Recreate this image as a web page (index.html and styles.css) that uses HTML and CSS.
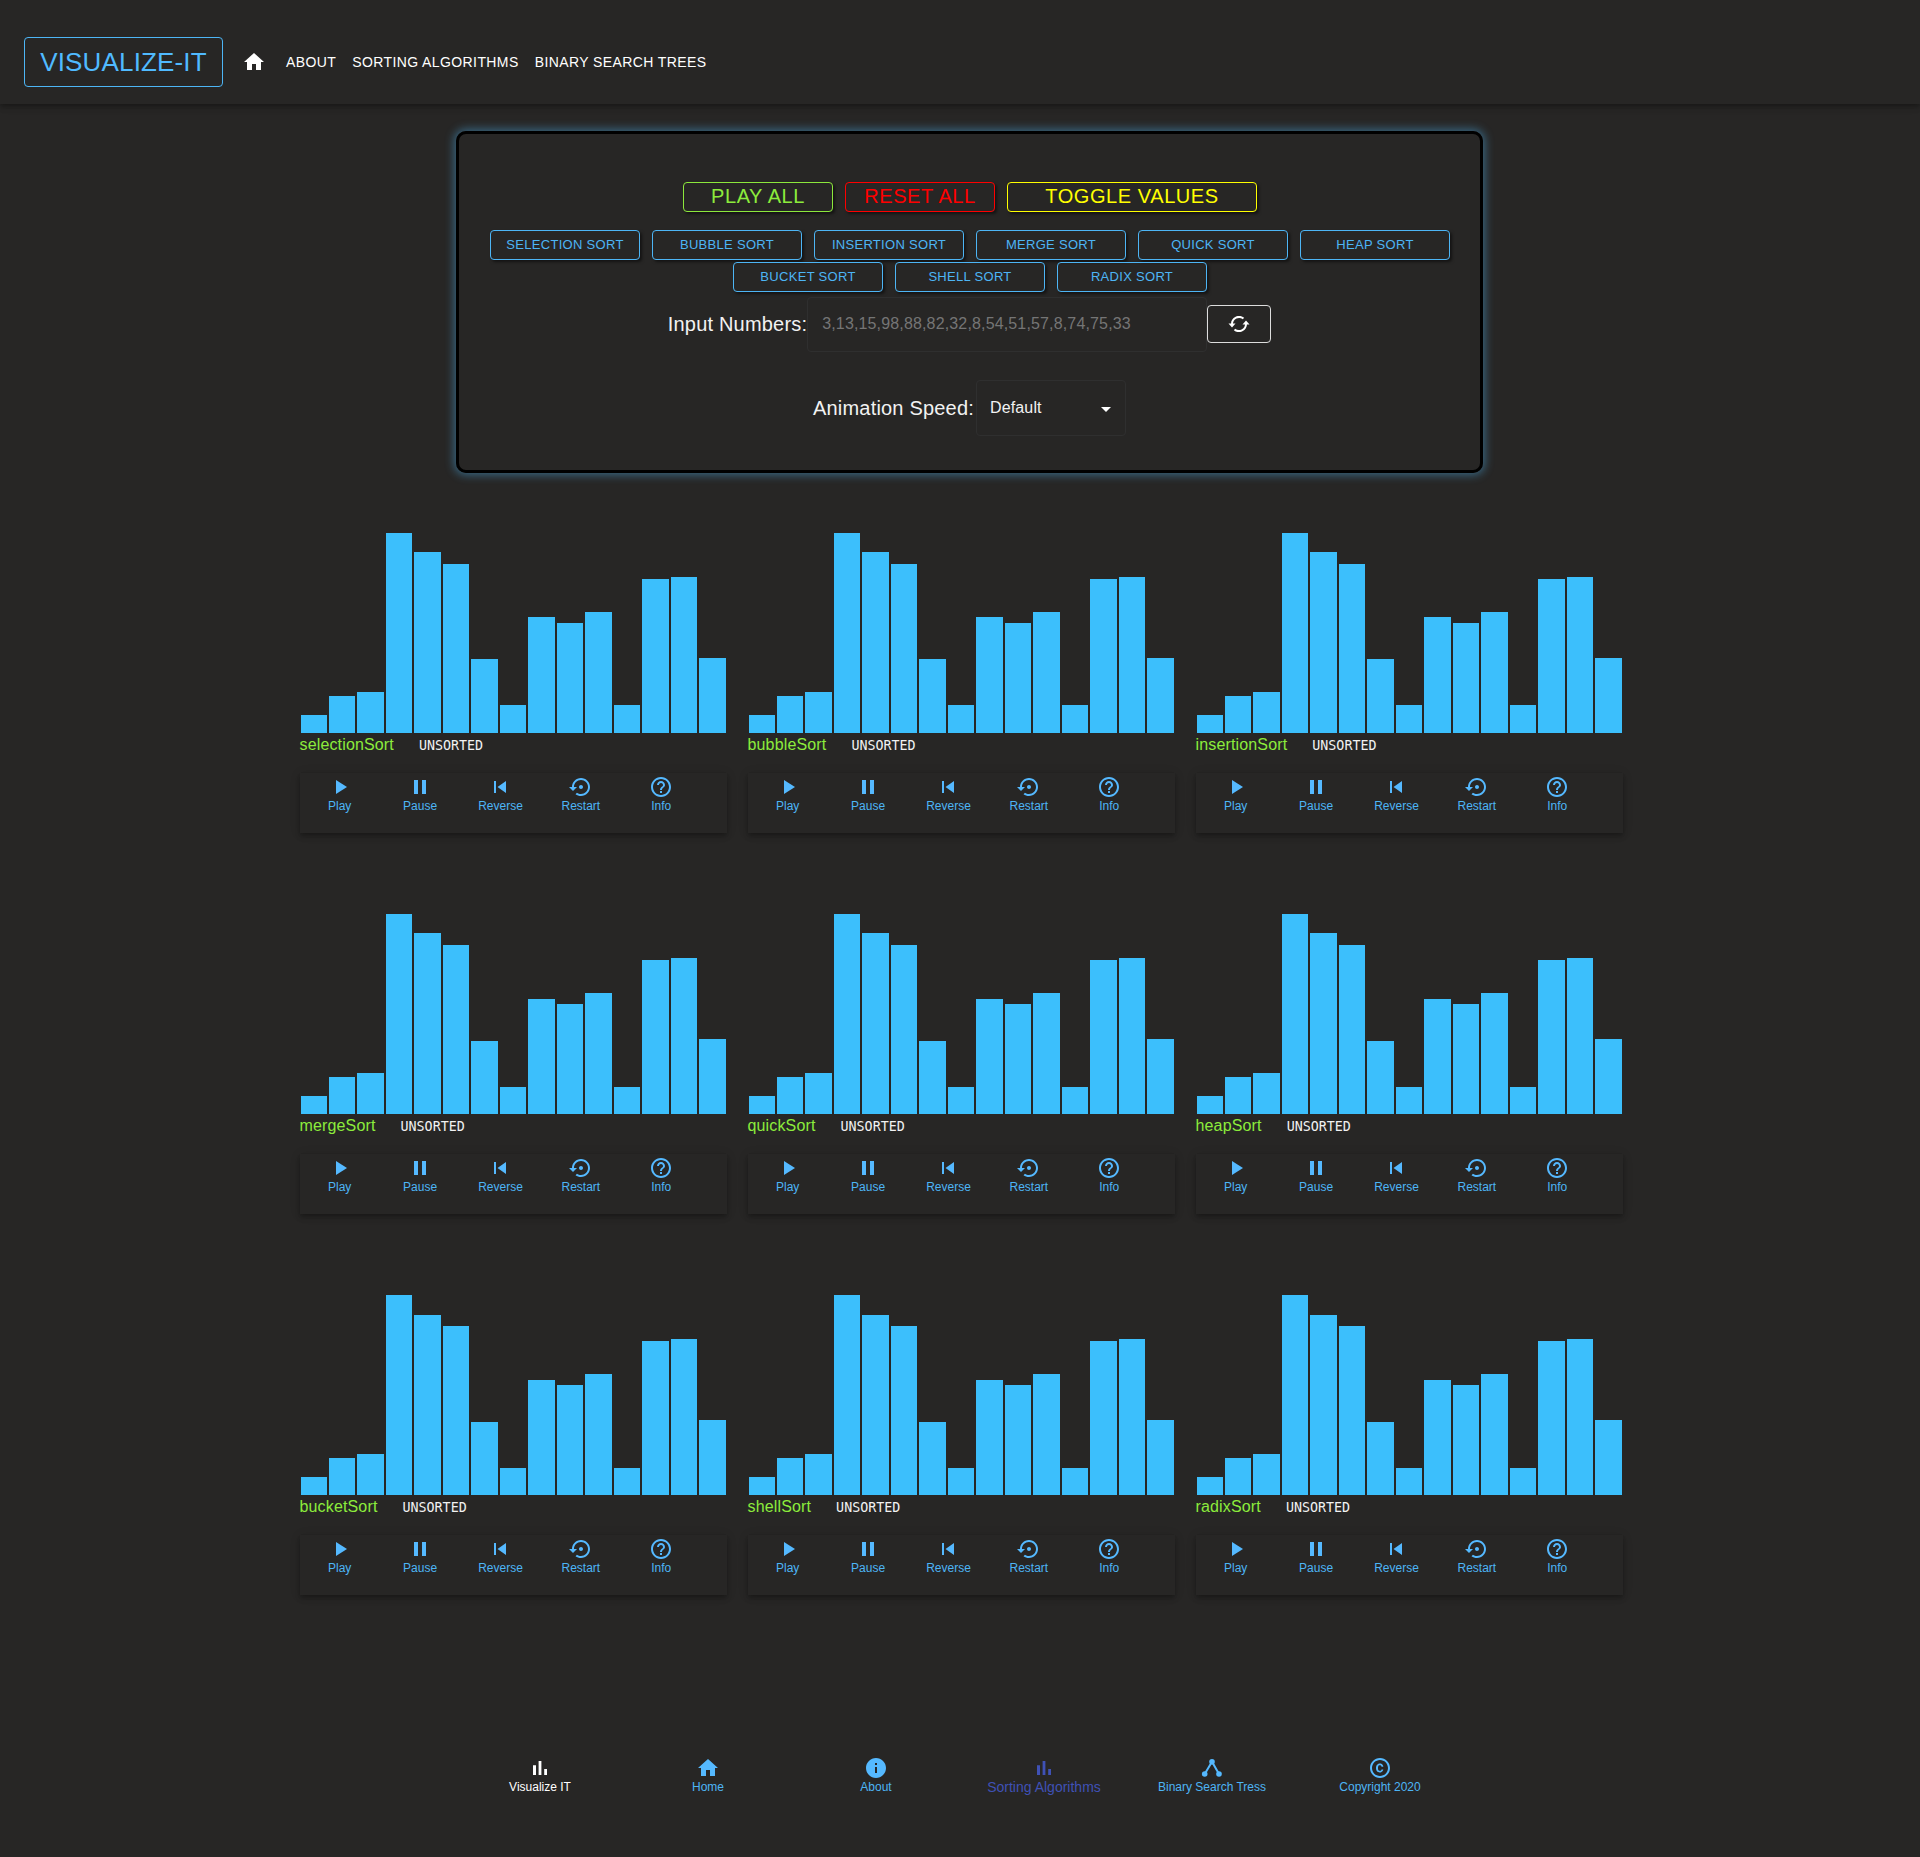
FILE: index.html
```html
<!DOCTYPE HTML>
<html>
<head>
<meta charset="utf-8">
<title>Visualize-IT</title>
<link rel="stylesheet" href="styles.css">
</head>
<body>
<header class="topbar">
  <a class="logo" href="#">VISUALIZE-IT</a>
  <a class="home-link" href="#">
    <svg viewBox="0 0 24 24"><path d="M10 20v-6h4v6h5v-8h3L12 3 2 12h3v8z"/></svg>
  </a>
  <a class="nav-link" href="#">About</a>
  <a class="nav-link" href="#">Sorting Algorithms</a>
  <a class="nav-link" href="#">Binary Search Trees</a>
</header>

<section class="panel">
  <div class="btn-row">
    <button class="btn btn-big btn-green">Play All</button>
    <button class="btn btn-big btn-red">Reset All</button>
    <button class="btn btn-big btn-yellow btn-wide">Toggle Values</button>
  </div>
  <div class="btn-row sort-row">
    <button class="btn">Selection Sort</button>
    <button class="btn">Bubble Sort</button>
    <button class="btn">Insertion Sort</button>
    <button class="btn">Merge Sort</button>
    <button class="btn">Quick Sort</button>
    <button class="btn">Heap Sort</button>
    <button class="btn">Bucket Sort</button>
    <button class="btn">Shell Sort</button>
    <button class="btn">Radix Sort</button>
  </div>
  <div class="input-row">
    <label class="field-label" for="numbers">Input Numbers:</label>
    <input class="numbers-input" id="numbers" type="text" placeholder="3,13,15,98,88,82,32,8,54,51,57,8,74,75,33">
    <button class="refresh-btn">
      <svg viewBox="0 0 22 16">
        <path class="sync-line" d="M4 8A7 7 0 0 1 15.500 2.600M18 8A7 7 0 0 1 6.500 13.400"/>
        <path d="M.5 7.500h7L4 11.500zM14.500 8.500h7L18 4.500z"/>
      </svg>
    </button>
  </div>
  <div class="speed-row">
    <span class="field-label">Animation Speed:</span>
    <div class="speed-select">
      <span>Default</span>
      <i class="caret"></i>
    </div>
  </div>
</section>

<main class="sorters" id="sorters"></main>

<footer class="bottom-nav">
  <a class="bottom-item white" href="#">
    <svg viewBox="0 0 24 24"><path d="M5 9.2h3V19H5zM10.6 5h2.8v14h-2.8zm5.6 8H19v6h-2.8z"/></svg>
    <span>Visualize IT</span>
  </a>
  <a class="bottom-item" href="#">
    <svg viewBox="0 0 24 24"><path d="M10 20v-6h4v6h5v-8h3L12 3 2 12h3v8z"/></svg>
    <span>Home</span>
  </a>
  <a class="bottom-item" href="#">
    <svg viewBox="0 0 24 24"><path d="M12 2C6.48 2 2 6.48 2 12s4.48 10 10 10 10-4.48 10-10S17.52 2 12 2zm1 15h-2v-6h2v6zm0-8h-2V7h2v2z"/></svg>
    <span>About</span>
  </a>
  <a class="bottom-item selected" href="#">
    <svg viewBox="0 0 24 24"><path d="M5 9.2h3V19H5zM10.6 5h2.8v14h-2.8zm5.6 8H19v6h-2.8z"/></svg>
    <span>Sorting Algorithms</span>
  </a>
  <a class="bottom-item" href="#">
    <svg viewBox="0 0 24 24"><path class="tree-line" d="M12 5.700 4.700 18M12 5.700 19 18"/><circle cx="12" cy="5.700" r="2.800"/><circle cx="4.700" cy="18" r="2.800"/><circle cx="19" cy="18" r="2.800"/></svg>
    <span>Binary Search Tress</span>
  </a>
  <a class="bottom-item" href="#">
    <svg viewBox="0 0 24 24"><path d="M10.08 10.86c.05-.33.16-.62.3-.87s.34-.46.59-.62c.24-.15.54-.22.91-.23.23.01.44.05.63.13.2.09.38.21.52.36s.25.33.34.53.13.42.14.64h1.79c-.02-.47-.11-.9-.28-1.29s-.4-.73-.7-1.01-.66-.5-1.08-.66-.88-.23-1.39-.23c-.65 0-1.22.11-1.7.34s-.88.53-1.2.92-.56.84-.71 1.36S8 11.29 8 11.87v.27c0 .58.08 1.12.23 1.64s.39.97.71 1.35.72.69 1.2.91 1.05.34 1.7.34c.47 0 .91-.08 1.32-.23s.77-.36 1.08-.63.56-.58.74-.94.29-.74.3-1.15h-1.79c-.01.21-.06.4-.15.58s-.21.33-.36.46-.32.23-.52.3c-.19.07-.39.09-.6.1-.36-.01-.66-.08-.89-.23-.25-.16-.45-.37-.59-.62s-.25-.55-.3-.88-.08-.67-.08-1v-.27c0-.35.03-.68.08-1.01zM12 2C6.48 2 2 6.48 2 12s4.48 10 10 10 10-4.48 10-10S17.52 2 12 2zm0 18c-4.41 0-8-3.59-8-8s3.59-8 8-8 8 3.59 8 8-3.59 8-8 8z"/></svg>
    <span>Copyright 2020</span>
  </a>
</footer>

<script src="script.js"></script>
</body>
</html>
```

FILE: styles.css
```css
* {
  box-sizing: border-box;
}

body {
  margin: 0;
  height: 1857px;
  overflow: hidden;
  background-color: #272625;
  color: #fff;
  font-family: "Liberation Sans", Arial, sans-serif;
}

a {
  text-decoration: none;
  color: inherit;
}

button {
  font-family: inherit;
  background: none;
  cursor: pointer;
}

/* top bar */
.topbar {
  display: flex;
  align-items: center;
  height: 104px;
  padding: 20px 0 0 24px;
  box-shadow: 0 2px 4px -1px rgba(0, 0, 0, 0.2), 0 4px 5px 0 rgba(0, 0, 0, 0.14), 0 1px 10px 0 rgba(0, 0, 0, 0.12);
}

.logo {
  display: block;
  width: 199px;
  height: 50px;
  line-height: 48px;
  text-align: center;
  border: 1px solid #4db5f5;
  border-radius: 4px;
  color: #50baff;
  font-size: 26px;
  letter-spacing: 0.15px;
}

.home-link {
  display: block;
  width: 24px;
  height: 24px;
  margin: 0 12px 0 19px;
}

.home-link svg {
  display: block;
  fill: #fff;
}

.nav-link {
  padding: 0 8px;
  font-size: 14px;
  letter-spacing: 0.4px;
  text-transform: uppercase;
  line-height: 24px;
}

/* control panel */
.panel {
  width: 1027px;
  height: 342px;
  margin: 27px 0 0 456px;
  padding: 48px 0 0 1px;
  border: 3px solid #000;
  border-radius: 10px;
  box-shadow: 0 0 10px 2px rgba(77, 181, 245, 0.45);
}

.btn-row {
  display: flex;
  flex-wrap: wrap;
  justify-content: center;
  column-gap: 12px;
  row-gap: 2px;
}

.sort-row {
  margin-top: 18px;
}

.btn {
  width: 150px;
  height: 30px;
  padding: 0 0 2px;
  border: 1px solid #4db5f5;
  border-radius: 4px;
  color: #4db5f5;
  font-size: 13px;
  letter-spacing: 0.3px;
  text-transform: uppercase;
  box-shadow: 2px 2px 3px rgba(0, 0, 0, 0.5);
}

.btn-big {
  font-size: 20px;
  letter-spacing: 0.57px;
}

.btn-wide {
  width: 250px;
}

.btn-green {
  border-color: #8ce83c;
  color: #8cec3c;
}

.btn-red {
  border-color: #f00;
  color: #f00;
}

.btn-yellow {
  border-color: #ff0;
  color: #ff0;
}

.input-row {
  display: flex;
  align-items: center;
  justify-content: center;
  margin-top: 5px;
  padding-right: 1px;
}

.field-label {
  font-size: 20px;
  letter-spacing: 0.19px;
  color: #f2f2f2;
}

.input-row .field-label {
  padding-bottom: 1px;
}

.numbers-input {
  width: 400px;
  height: 55px;
  padding: 0 14px 2px;
  border: 1px solid #2f2f2f;
  border-radius: 4px;
  background: none;
  color: #fff;
  font-family: inherit;
  font-size: 16px;
  letter-spacing: 0.15px;
  outline: none;
}

.numbers-input::placeholder {
  color: #757575;
  opacity: 1;
}

.refresh-btn {
  display: flex;
  align-items: center;
  justify-content: center;
  width: 64px;
  height: 38px;
  margin-bottom: 1px;
  padding: 0;
  border: 1px solid #ddd;
  border-radius: 4px;
}

.refresh-btn svg {
  width: 22px;
  height: 16px;
  fill: #fff;
}

.refresh-btn .sync-line {
  fill: none;
  stroke: #fff;
  stroke-width: 2;
}

.speed-row {
  display: flex;
  align-items: center;
  justify-content: center;
  margin-top: 28px;
  padding-right: 1px;
}

.speed-select {
  position: relative;
  display: flex;
  align-items: center;
  width: 150px;
  height: 56px;
  margin-left: 2px;
  padding-left: 13px;
  border: 1px solid #2f2f2f;
  border-radius: 4px;
  font-size: 16px;
  letter-spacing: 0.15px;
  color: #f2f2f2;
}

.caret {
  position: absolute;
  right: 14px;
  top: 26px;
  border-left: 5px solid transparent;
  border-right: 5px solid transparent;
  border-top: 5px solid #fff;
}

/* sorter cards */
.sorters {
  display: grid;
  grid-template-columns: repeat(3, 427px);
  column-gap: 21px;
  row-gap: 81.2px;
  margin: 60px 0 0 299.5px;
}

.chart {
  display: flex;
  align-items: flex-end;
  height: 200px;
}

.bar {
  flex: 1;
  margin: 0 1px;
  background-color: #3cbffc;
}

.sorter-head {
  display: flex;
  align-items: center;
  height: 24px;
}

.sorter-name {
  font-size: 16px;
  letter-spacing: 0.15px;
  color: #8cec3c;
}

.sorter-status {
  margin-left: 25px;
  font-family: "DejaVu Sans Mono", monospace;
  font-size: 13.33px;
  color: #f2f2f2;
}

.controls {
  display: flex;
  height: 60px;
  margin-top: 16px;
  box-shadow: 0 2px 4px -1px rgba(0, 0, 0, 0.2), 0 4px 5px 0 rgba(0, 0, 0, 0.14), 0 1px 10px 0 rgba(0, 0, 0, 0.12);
}

.control {
  display: flex;
  flex-direction: column;
  align-items: center;
  width: 80.4px;
  padding-top: 2px;
  color: #4db5f5;
  font-size: 12px;
}

.control svg {
  width: 24px;
  height: 24px;
  fill: #55b9ff;
}

/* footer */
.bottom-nav {
  display: flex;
  justify-content: center;
  margin-top: 160.6px;
}

.bottom-item {
  display: flex;
  flex-direction: column;
  align-items: center;
  width: 168px;
  font-size: 12px;
  color: #4db5f5;
}

.bottom-item svg {
  width: 24px;
  height: 24px;
  fill: #55b9ff;
}

.bottom-item .tree-line {
  stroke: #55b9ff;
  stroke-width: 2;
  fill: none;
}

.bottom-item.white {
  color: #fff;
}

.bottom-item.white svg {
  fill: #fff;
}

.bottom-item.selected {
  color: #3f51b5;
  font-size: 14px;
  line-height: 15px;
}

.bottom-item.selected svg {
  fill: #3f51b5;
}
```

FILE: script.js
```js
const sorts = ['selectionSort', 'bubbleSort', 'insertionSort', 'mergeSort', 'quickSort', 'heapSort', 'bucketSort', 'shellSort', 'radixSort'];
const numbers = [3, 13, 15, 98, 88, 82, 32, 8, 54, 51, 57, 8, 74, 75, 33];

const controlIcons = [
  ['Play', 'M8 5v14l11-7z'],
  ['Pause', 'M6 19h4V5H6v14zm8-14v14h4V5h-4z'],
  ['Reverse', 'M6 6h2v12H6zm3.5 6l8.5 6V6z'],
  ['Restart', 'M14 12c0-1.1-.9-2-2-2s-2 .9-2 2 .9 2 2 2 2-.9 2-2zm-2-9c-4.97 0-9 4.03-9 9H0l4 4 4-4H5c0-3.87 3.13-7 7-7s7 3.13 7 7-3.13 7-7 7c-1.51 0-2.91-.49-4.06-1.3l-1.42 1.44C8.04 20.3 9.94 21 12 21c4.97 0 9-4.03 9-9s-4.03-9-9-9z'],
  ['Info', 'M11 18h2v-2h-2v2zm1-16C6.48 2 2 6.48 2 12s4.48 10 10 10 10-4.48 10-10S17.52 2 12 2zm0 18c-4.41 0-8-3.59-8-8s3.59-8 8-8 8 3.59 8 8-3.59 8-8 8zm0-14c-2.21 0-4 1.79-4 4h2c0-1.1.9-2 2-2s2 .9 2 2c0 2-3 1.75-3 5h2c0-2.25 3-2.5 3-5 0-2.21-1.79-4-4-4z']
];

// bar height follows the value, with a minimum so small numbers still show
function barHeight(value) {
  return 1.915 * value + 12.28;
}

const sorters = document.getElementById('sorters');

sorts.forEach((name) => {
  const bars = numbers.map((n) => `<div class="bar" style="height: ${barHeight(n)}px"></div>`).join('');
  const controls = controlIcons.map(([label, d]) => `
    <a class="control" href="#">
      <svg viewBox="0 0 24 24"><path d="${d}"/></svg>
      <span>${label}</span>
    </a>`).join('');

  const card = document.createElement('div');
  card.className = 'sorter';
  card.innerHTML = `
    <div class="chart">${bars}</div>
    <div class="sorter-head">
      <span class="sorter-name">${name}</span>
      <span class="sorter-status">UNSORTED</span>
    </div>
    <div class="controls">${controls}</div>`;
  sorters.appendChild(card);
});
```
